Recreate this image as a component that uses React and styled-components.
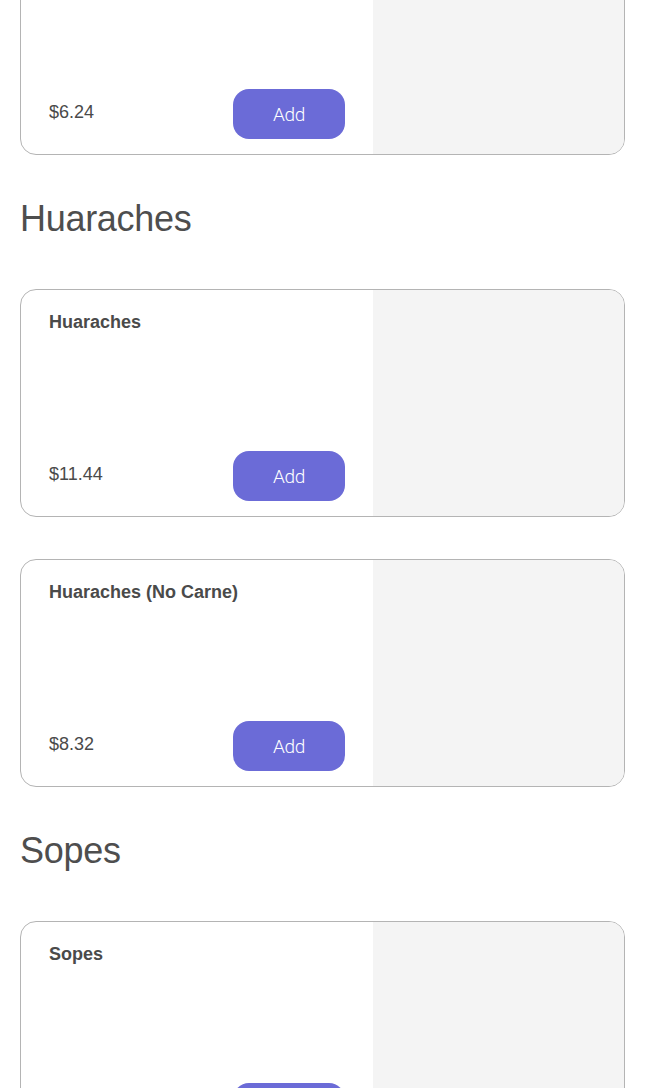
import React from 'react';
import styled, {createGlobalStyle} from 'styled-components';

const GlobalStyle = createGlobalStyle`
  body {
    margin: 0;
    background: #ffffff;
    font-family: "Liberation Sans", Arial, sans-serif;
    color: #4a4a4a;
  }
`;

const Page = styled.div`
  width: 605px;
  padding: 0 20px;
  margin-top: -73px;
  overflow: hidden;
`;

const Section = styled.section`
  display: flex;
  flex-direction: column;
  gap: 42px;
`;

const Heading = styled.h2`
  margin: 43px 0 49px;
  font-size: 36px;
  line-height: 42px;
  font-weight: 400;
  color: #4e4e4e;
  letter-spacing: -0.3px;
`;

const Card = styled.div`
  display: grid;
  grid-template-columns: 352px 1fr;
  height: 228px;
  box-sizing: border-box;
  border: 1px solid #b4b4b4;
  border-radius: 16px;
  overflow: hidden;
  background: #fff;
`;

const Info = styled.div`
  display: flex;
  flex-direction: column;
  justify-content: space-between;
  padding: 21px 28px 15px;
`;

const Title = styled.div`
  font-size: 18px;
  line-height: 22px;
  font-weight: 700;
  color: #4a4a4a;
`;

const Bottom = styled.div`
  display: flex;
  justify-content: space-between;
  align-items: center;
`;

const Price = styled.span`
  font-size: 18px;
  line-height: 22px;
  color: #4a4a4a;
  margin-top: -4px;
`;

const AddButton = styled.button`
  width: 112px;
  height: 50px;
  border: none;
  border-radius: 16px;
  background: #6b6bd7;
  color: #fff;
  font-family: Roboto, "Liberation Sans", sans-serif;
  font-weight: 300;
  font-size: 19px;
  letter-spacing: -0.4px;
  cursor: pointer;
`;

const Picture = styled.div`
  background: #f4f4f4;
`;

const items = [
    {section: null, list: [{name: '', price: '$6.24'}]},
    {section: 'Huaraches', list: [
        {name: 'Huaraches', price: '$11.44'},
        {name: 'Huaraches (No Carne)', price: '$8.32'},
    ]},
    {section: 'Sopes', list: [{name: 'Sopes', price: '$5.20'}]},
];

const MenuCard = ({name, price}) => (
    <Card>
        <Info>
            <Title>{name}</Title>
            <Bottom>
                <Price>{price}</Price>
                <AddButton>Add</AddButton>
            </Bottom>
        </Info>
        <Picture />
    </Card>
);

const App = () => (
    <Page>
        <GlobalStyle />
        {items.map((group, i) => (
            <div key={i}>
                {group.section && <Heading>{group.section}</Heading>}
                <Section>
                    {group.list.map((item, j) => <MenuCard key={j} {...item} />)}
                </Section>
            </div>
        ))}
    </Page>
);

export default App;
